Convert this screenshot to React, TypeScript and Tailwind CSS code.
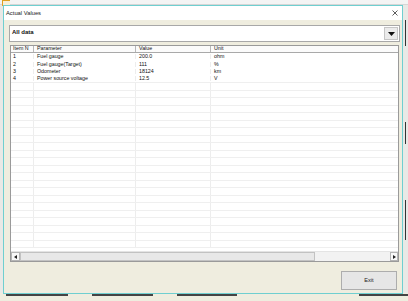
import React from "react";

const rows = [
  ["1", "Fuel gauge", "200.0", "ohm"],
  ["2", "Fuel gauge(Target)", "111", "%"],
  ["3", "Odometer", "18124", "km"],
  ["4", "Power source voltage", "12.5", "V"],
];

const EMPTY = 22;

function Cells({ r, header }: { r: string[]; header?: boolean }) {
  const sep = header ? "border-r border-[#b8b8b8]" : "border-r border-[#ededed]";
  return (
    <>
      <div className={`w-[23px] shrink-0 pl-[2px] ${sep}`}>{r[0]}</div>
      <div className={`w-[102px] shrink-0 pl-[3px] ${sep}`}>{r[1]}</div>
      <div className={`w-[75px] shrink-0 pl-[3px] ${sep}`}>{r[2]}</div>
      <div className="flex-1 pl-[3px]">{r[3]}</div>
    </>
  );
}

export default function App() {
  return (
    <div
      className="relative w-[408px] h-[301px] overflow-hidden bg-[#e9e9e6] text-[#111]"
      style={{ fontFamily: "'Liberation Sans', Arial, sans-serif" }}
    >
      {/* desktop bits behind the dialog */}
      <div className="absolute left-0 top-0 w-[408px] h-[5px] bg-[#f4f4f4] border-b border-[#d6d6d6]" />
      <div className="absolute left-[2px] top-0 w-[8px] h-[6px] border-l border-t border-[#e0a020] bg-[#f8f0d8]" />
      <div className="absolute left-[405px] top-[20px] w-[1px] h-[26px] bg-[#333]" />
      <div className="absolute left-[405px] top-[122px] w-[1px] h-[22px] bg-[#333]" />
      <div className="absolute left-[405px] top-[200px] w-[1px] h-[40px] bg-[#333]" />
      <div className="absolute left-0 top-[293px] w-[408px] h-[8px] bg-[#efeddf]" />
      <div className="absolute left-[6px] top-[294px] w-[62px] h-[2px] bg-[#444]" />
      <div className="absolute left-[92px] top-[294px] w-[61px] h-[2px] bg-[#444]" />
      <div className="absolute left-[177px] top-[294px] w-[60px] h-[2px] bg-[#444]" />
      <div className="absolute left-[359px] top-[294px] w-[49px] h-[2px] bg-[#444]" />
      <div className="absolute left-[359px] top-[288px] w-[1px] h-[7px] bg-[#444]" />

      {/* dialog window */}
      <div className="absolute left-[3px] top-[5px] w-[400px] h-[289px] border border-[#6fcfd0] bg-[#efeddf] flex flex-col">
        <div className="h-[16px] bg-white flex items-center justify-between pl-[2px] pr-[3px] text-[5.8px] text-[#222]">
          <span>Actual Values</span>
          <svg width="6" height="6" viewBox="0 0 6 6" className="mr-[1px]">
            <path d="M0.5 0.5 L5.5 5.5 M5.5 0.5 L0.5 5.5" stroke="#333" strokeWidth="0.8" />
          </svg>
        </div>
        <div className="flex-1 flex flex-col pl-[5px] pr-[2px] pt-[5px] pb-[3px]">
          {/* combo */}
          <div className="h-[17px] border border-[#a8a8a8] bg-white flex items-center justify-between pl-[2px] pr-[1px]">
            <span className="font-bold text-[6px] -mt-[2px]">All data</span>
            <div className="w-[14px] h-[13px] bg-[#ebebeb] border border-[#c6c6c6] flex items-center justify-center">
              <svg width="7" height="4" viewBox="0 0 7 4">
                <path d="M0 0 H7 L3.5 4 Z" fill="#111" />
              </svg>
            </div>
          </div>
          {/* table */}
          <div className="mt-[3px] ml-[1px] mr-[1px] h-[217px] border border-[#9a9a9a] bg-white flex flex-col text-[5.3px] overflow-hidden">
            <div className="h-[7px] shrink-0 flex items-center border-b border-[#a9a9a9] bg-[#fbfbfb] leading-none">
              <Cells r={["Item N", "Parameter", "Value", "Unit"]} header />
            </div>
            <div className="flex-1 flex flex-col overflow-hidden">
              {rows.map((r, i) => (
                <div
                  key={i}
                  className={`h-[7.5px] shrink-0 flex items-center leading-none ${i === 3 ? "border-b border-[#efefef]" : ""}`}
                >
                  <Cells r={r} />
                </div>
              ))}
              {Array.from({ length: EMPTY }).map((_, i) => (
                <div key={i} className="h-[7.5px] shrink-0 flex border-b border-[#efefef]">
                  <Cells r={["", "", "", ""]} />
                </div>
              ))}
            </div>
            {/* horizontal scrollbar */}
            <div className="h-[10px] shrink-0 flex bg-[#f2f2f2] border-t border-[#e4e4e4]">
              <div className="w-[9px] h-full border border-[#b5b5b5] bg-[#f8f8f8] flex items-center justify-center">
                <svg width="3" height="4" viewBox="0 0 3 4">
                  <path d="M3 0 V4 L0 2 Z" fill="#222" />
                </svg>
              </div>
              <div className="w-[295px] h-full border border-[#c2c2c2] bg-[#e8e8e8]" />
              <div className="flex-1" />
              <div className="w-[8px] h-full border border-[#b5b5b5] bg-[#f8f8f8] flex items-center justify-center">
                <svg width="3" height="4" viewBox="0 0 3 4">
                  <path d="M0 0 V4 L3 2 Z" fill="#222" />
                </svg>
              </div>
            </div>
          </div>
          {/* footer */}
          <div className="flex-1 flex items-start justify-end pt-[9px] pr-[3px]">
            <button className="w-[56px] h-[19px] border border-[#adadad] bg-[#e6e6e6] text-[5.6px] text-[#222] flex items-center justify-center">
              Exit
            </button>
          </div>
        </div>
      </div>
    </div>
  );
}
